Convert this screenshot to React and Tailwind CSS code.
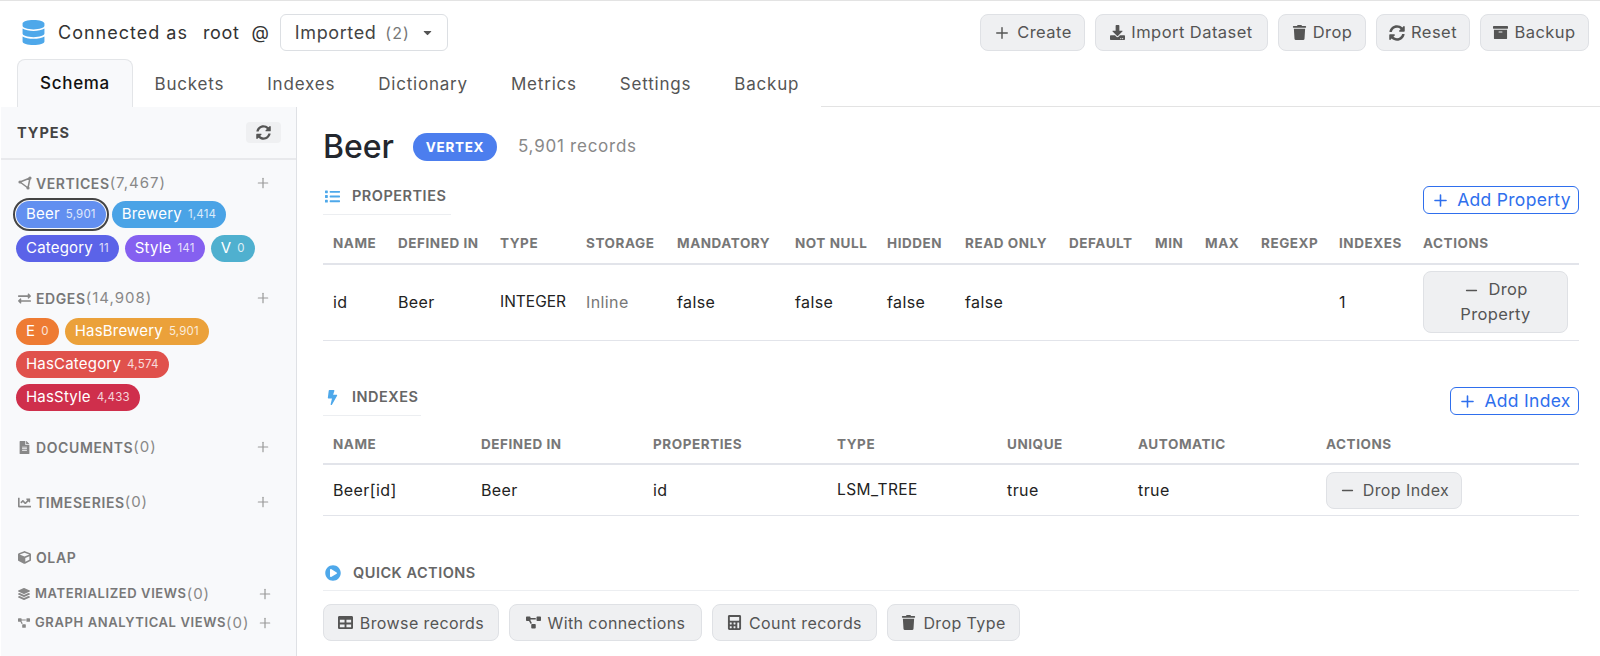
import {
  FaArchive,
  FaBolt,
  FaCalculator,
  FaCaretDown,
  FaChartLine,
  FaCube,
  FaDatabase,
  FaDownload,
  FaExchangeAlt,
  FaFileAlt,
  FaLayerGroup,
  FaList,
  FaPlayCircle,
  FaProjectDiagram,
  FaSyncAlt,
  FaTable,
  FaTrash,
} from "react-icons/fa";
import { Minus, Plus } from "lucide-react";

const tabs = ["Buckets", "Indexes", "Dictionary", "Metrics", "Settings", "Backup"];

const propColumns = [
  ["NAME", "w-[65px]"],
  ["DEFINED IN", "w-[102px]"],
  ["TYPE", "w-[86px]"],
  ["STORAGE", "w-[91px]"],
  ["MANDATORY", "w-[118px]"],
  ["NOT NULL", "w-[92px]"],
  ["HIDDEN", "w-[78px]"],
  ["READ ONLY", "w-[104px]"],
  ["DEFAULT", "w-[86px]"],
  ["MIN", "w-[50px]"],
  ["MAX", "w-[56px]"],
  ["REGEXP", "w-[78px]"],
  ["INDEXES", "w-[84px]"],
  ["ACTIONS", "w-[166px]"],
];

const indexColumns = [
  ["NAME", "w-[148px]"],
  ["DEFINED IN", "w-[172px]"],
  ["PROPERTIES", "w-[184px]"],
  ["TYPE", "w-[170px]"],
  ["UNIQUE", "w-[131px]"],
  ["AUTOMATIC", "w-[188px]"],
  ["ACTIONS", "w-[263px]"],
];

// triangle with dots on its corners, for the vertices heading
function VertexIcon() {
  return (
    <svg width="14" height="14" viewBox="0 0 14 14" fill="none" stroke="currentColor">
      <polygon points="2,6 12,2 10,12" strokeWidth="1.5" strokeLinejoin="round" />
      <circle cx="2" cy="6" r="1.6" fill="currentColor" stroke="none" />
      <circle cx="12" cy="2" r="1.6" fill="currentColor" stroke="none" />
      <circle cx="10" cy="12" r="1.6" fill="currentColor" stroke="none" />
    </svg>
  );
}

function TopButton({ icon, label, className }) {
  return (
    <button className={`flex h-[37px] items-center justify-center gap-[6px] rounded-lg border border-[#dfe1e5] bg-[#eff0f2] text-[16.5px] tracking-[0.45px] text-[#555] ${className}`}>
      {icon}
      {label}
    </button>
  );
}

function Pill({ name, count, color, selected }) {
  return (
    <span
      className={`flex h-[27px] items-center gap-[6px] whitespace-nowrap rounded-full px-[10px] text-[15px] tracking-[0.2px] text-white ${color} ${
        selected ? "outline-2 outline-offset-1 outline-[#444]" : ""
      }`}
    >
      {name}
      <span className="text-[11.5px] opacity-80">{count}</span>
    </span>
  );
}

function SideHeading({ icon, label, count, small, className }) {
  return (
    <div className={`flex items-center pl-[17px] ${small ? "pr-[23px]" : "pr-[25px]"} ${className}`}>
      <span className={`flex shrink-0 items-center text-[#888] ${small ? "w-[17px]" : "w-[18px]"}`}>{icon}</span>
      <span className={`font-semibold tracking-[0.6px] text-[#777] ${small ? "text-[13px]" : "text-[14px]"}`}>{label}</span>
      {count && <span className="text-[15px] tracking-[1px] text-[#888]">{count}</span>}
      {count !== undefined && <Plus size={16} strokeWidth={1.8} className="ml-auto text-[#999]" />}
    </div>
  );
}

function SectionTitle({ icon, label, className }) {
  return (
    <div className={`flex h-[20px] items-center gap-[12px] pl-[2px] ${className}`}>
      {icon}
      <span className="text-[14.5px] font-semibold tracking-[0.5px] text-[#666]">{label}</span>
    </div>
  );
}

function AddButton({ label, className }) {
  return (
    <button className={`flex h-[28px] items-center justify-center gap-[7px] rounded-md border border-[#2f6fed] text-[17.5px] tracking-[0.3px] text-[#2f6fed] ${className}`}>
      <Plus size={19} strokeWidth={2} />
      {label}
    </button>
  );
}

function HeadRow({ columns, height }) {
  return (
    <div className={`flex items-center border-b-2 border-[#e2e4ea] pb-[2px] ${height}`}>
      {columns.map(([label, width]) => (
        <div key={label} className={`${width} shrink-0 pl-[10px] text-[13.5px] font-bold tracking-[0.55px] whitespace-nowrap text-[#777]`}>
          {label}
        </div>
      ))}
    </div>
  );
}

function ActionButton({ icon, label, className }) {
  return (
    <button className={`flex h-[37px] items-center justify-center gap-[7px] rounded-lg border border-[#dfe1e5] bg-[#eff0f2] text-[16px] tracking-[0.4px] text-[#555] ${className}`}>
      {icon}
      {label}
    </button>
  );
}

export default function App() {
  return (
    <div className="h-[656px] w-[1600px] overflow-hidden border-t border-[#e3e3e3] bg-white font-['Inter',sans-serif] text-[#222]">
      {/* Header */}
      <div className="mt-[13px] flex h-[37px] items-center pl-[21px] pr-[11px]">
        <FaDatabase className="text-[25px] text-[#4ea8ea]" />
        <span className="ml-[12px] text-[18px] tracking-[1px] text-[#333]">Connected as</span>
        <span className="ml-[15px] text-[18px] tracking-[0.65px] text-[#333]">root</span>
        <span className="ml-[12px] text-[18px] text-[#333]">@</span>
        <div className="ml-[11px] flex h-[37px] w-[168px] items-center rounded-md border border-[#dcdfe3] pl-[14px] text-[18px] tracking-[0.6px] text-[#444]">
          Imported
          <span className="ml-[9px] text-[16px] tracking-[1px] text-[#777]">(2)</span>
          <FaCaretDown className="ml-[11px] text-[13px] text-[#555]" />
        </div>
        <div className="ml-auto flex gap-[10px]">
          <TopButton className="w-[105px]" icon={<Plus size={18} strokeWidth={1.9} />} label="Create" />
          <TopButton className="w-[173px]" icon={<FaDownload className="text-[15px]" />} label="Import Dataset" />
          <TopButton className="w-[88px]" icon={<FaTrash className="text-[15px]" />} label="Drop" />
          <TopButton className="w-[94px]" icon={<FaSyncAlt className="text-[16px]" />} label="Reset" />
          <TopButton className="w-[109px]" icon={<FaArchive className="text-[15px]" />} label="Backup" />
        </div>
      </div>

      {/* Tabs */}
      <div className="mt-[8px] flex h-[48px] pl-[17px]">
        <div className="flex w-[116px] items-center justify-center rounded-t-lg border border-b-0 border-[#e3e5e8] bg-[#f8f9fb] pt-[1px] text-[17px] font-medium tracking-[0.7px] text-[#111]">
          Schema
        </div>
        <div className="flex">
          {tabs.map((tab) => (
            <div key={tab} className="flex items-center px-[21.5px] pt-[3px] text-[17px] tracking-[0.8px] text-[#555]">
              {tab}
            </div>
          ))}
        </div>
        <div className="flex-1 border-b border-[#e3e3e3]" />
      </div>

      <div className="flex h-[550px]">
        {/* Sidebar */}
        <aside className="ml-px w-[296px] shrink-0 border-r border-[#dfe1e5] bg-[#f8f9fb]">
          <div className="flex h-[53px] items-center justify-between border-b-2 border-[#e8e9ec] pl-[16px] pr-[15px]">
            <span className="text-[14.5px] font-bold tracking-[1px] text-[#444]">TYPES</span>
            <span className="flex h-[21px] w-[35px] items-center justify-center rounded bg-[#eff0f2]">
              <FaSyncAlt className="text-[15px] text-[#555]" />
            </span>
          </div>

          <SideHeading className="mt-[13px] h-[20px]" icon={<VertexIcon />} label="VERTICES" count="(7,467)" />
          <div className="mt-[8px] flex w-[265px] flex-wrap gap-x-[6px] gap-y-[7px] pl-[15px]">
            <Pill name="Beer" count="5,901" color="bg-[#628ff0]" selected />
            <Pill name="Brewery" count="1,414" color="bg-[#4aa3e6]" />
            <Pill name="Category" count="11" color="bg-[#5b63e8]" />
            <Pill name="Style" count="141" color="bg-[#8560f0]" />
            <Pill name="V" count="0" color="bg-[#4fb0cf]" />
          </div>

          <SideHeading className="mt-[26px] h-[20px]" icon={<FaExchangeAlt className="text-[13px]" />} label="EDGES" count="(14,908)" />
          <div className="mt-[10px] flex w-[265px] flex-wrap gap-x-[6px] gap-y-[6px] pl-[15px]">
            <Pill name="E" count="0" color="bg-[#ee7b33]" />
            <Pill name="HasBrewery" count="5,901" color="bg-[#eba13a]" />
            <Pill name="HasCategory" count="4,574" color="bg-[#e0514c]" />
            <Pill name="HasStyle" count="4,433" color="bg-[#cf2f4c]" />
          </div>

          <SideHeading className="mt-[26px] h-[20px]" icon={<FaFileAlt className="text-[13px]" />} label="DOCUMENTS" count="(0)" />
          <SideHeading className="mt-[35px] h-[20px]" icon={<FaChartLine className="text-[13px]" />} label="TIMESERIES" count="(0)" />
          <SideHeading className="mt-[35px] h-[20px]" icon={<FaCube className="text-[13px]" />} label="OLAP" />
          <SideHeading small className="mt-[17px] h-[20px]" icon={<FaLayerGroup className="text-[12px]" />} label="MATERIALIZED VIEWS" count="(0)" />
          <SideHeading small className="mt-[9px] h-[20px]" icon={<FaProjectDiagram className="text-[12px]" />} label="GRAPH ANALYTICAL VIEWS" count="(0)" />
        </aside>

        {/* Detail */}
        <main className="ml-[26px] w-[1256px] shrink-0">
          <div className="mt-[18px] flex h-[44px] items-center">
            <h1 className="text-[32px] font-medium text-[#23272e]">Beer</h1>
            <span className="ml-[19px] flex h-[28px] w-[84px] items-center justify-center rounded-full bg-[#4c7eee] text-[13.5px] font-bold tracking-[0.7px] text-white">
              VERTEX
            </span>
            <span className="ml-[21px] text-[17px] tracking-[0.75px] text-[#888]">5,901 records</span>
          </div>

          <div className="mt-[16px] flex items-start justify-between">
            <SectionTitle className="mt-[1px]" icon={<FaList className="text-[15px] text-[#4ea8ea]" />} label="PROPERTIES" />
            <AddButton className="mt-[1px] w-[156px]" label="Add Property" />
          </div>
          <div className="w-[128px] border-b border-[#eceef1]" />
          <div className="mt-[11px]">
            <HeadRow columns={propColumns} height="h-[39px]" />
            <div className="flex h-[76px] items-center border-b border-[#e2e4ea] pb-[2px] text-[16px] tracking-[0.4px]">
              <div className="w-[65px] shrink-0 pl-[10px]">id</div>
              <div className="w-[102px] shrink-0 pl-[10px]">Beer</div>
              <div className="w-[86px] shrink-0 pl-[10px] text-[15.5px] tracking-normal whitespace-nowrap">INTEGER</div>
              <div className="w-[91px] shrink-0 pl-[10px] text-[#777]">Inline</div>
              <div className="w-[118px] shrink-0 pl-[10px]">false</div>
              <div className="w-[92px] shrink-0 pl-[10px]">false</div>
              <div className="w-[78px] shrink-0 pl-[10px]">false</div>
              <div className="w-[104px] shrink-0 pl-[10px]">false</div>
              <div className="w-[270px] shrink-0" />
              <div className="w-[84px] shrink-0 pl-[10px]">1</div>
              <div className="shrink-0 pl-[10px]">
                <button className="h-[62px] w-[145px] rounded-lg border border-[#dfe1e5] bg-[#eff0f2] text-[16.5px] leading-[25px] tracking-[0.35px] text-[#555]">
                  <Minus size={17} strokeWidth={1.9} className="mr-[8px] inline" />
                  Drop
                  <br />
                  Property
                </button>
              </div>
            </div>
          </div>

          <div className="mt-[46px] flex items-start justify-between">
            <SectionTitle icon={<FaBolt className="text-[15px] text-[#4ea8ea]" />} label="INDEXES" />
            <AddButton className="w-[129px]" label="Add Index" />
          </div>
          <div className="w-[98px] border-b border-[#eceef1]" />
          <div className="mt-[11px]">
            <HeadRow columns={indexColumns} height="h-[38px]" />
            <div className="flex h-[51px] items-center border-b border-[#e2e4ea] text-[16px] tracking-[0.4px]">
              <div className="w-[148px] shrink-0 pl-[10px]">Beer[id]</div>
              <div className="w-[172px] shrink-0 pl-[10px]">Beer</div>
              <div className="w-[184px] shrink-0 pl-[10px]">id</div>
              <div className="w-[170px] shrink-0 pl-[10px] text-[15.5px]">LSM_TREE</div>
              <div className="w-[131px] shrink-0 pl-[10px]">true</div>
              <div className="w-[188px] shrink-0 pl-[10px]">true</div>
              <div className="shrink-0 pl-[10px]">
                <ActionButton className="w-[136px]" icon={<Minus size={17} strokeWidth={1.9} />} label="Drop Index" />
              </div>
            </div>
          </div>

          <div className="mt-[43px] flex h-[32px] items-start border-b border-[#eceef1] pt-[4px]">
            <SectionTitle className="gap-[11px]" icon={<FaPlayCircle className="text-[16px] text-[#4ea8ea]" />} label="QUICK ACTIONS" />
          </div>
          <div className="mt-[13px] flex gap-[10px]">
            <ActionButton className="w-[176px]" icon={<FaTable className="text-[15px]" />} label="Browse records" />
            <ActionButton className="w-[193px]" icon={<FaProjectDiagram className="text-[15px]" />} label="With connections" />
            <ActionButton className="w-[165px]" icon={<FaCalculator className="text-[15px]" />} label="Count records" />
            <ActionButton className="w-[133px]" icon={<FaTrash className="text-[15px]" />} label="Drop Type" />
          </div>
        </main>
      </div>
    </div>
  );
}
